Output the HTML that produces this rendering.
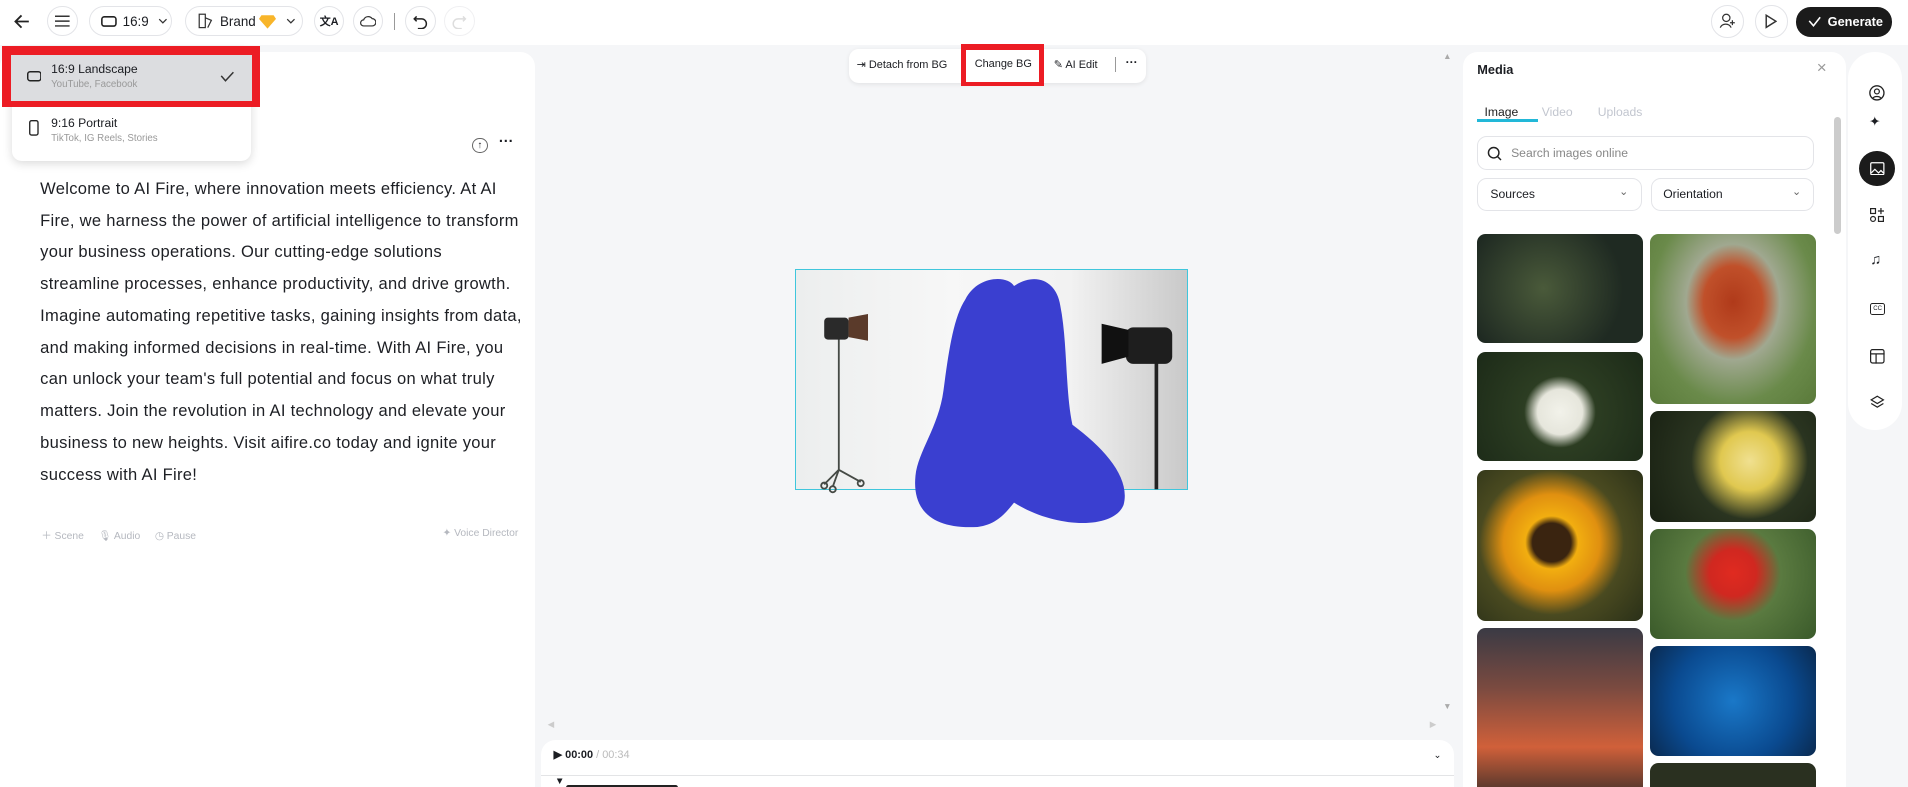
<!DOCTYPE html>
<html><head><meta charset="utf-8">
<style>
*{box-sizing:border-box;margin:0;padding:0}
html,body{width:1908px;height:787px;overflow:hidden;background:#f5f6f8}
body{font-family:"Liberation Sans",sans-serif;color:#1b1d22}
#r{zoom:1.21684;width:1568px;height:647px;position:relative;overflow:hidden}
.a{position:absolute}
.top{left:0;top:0;width:1568px;height:37px;background:#fff}
.circ{position:absolute;border:1px solid #e3e4e8;border-radius:50%;width:25px;height:25px;top:5px;display:flex;align-items:center;justify-content:center;background:#fff}
.pill{position:absolute;border:1px solid #e3e4e8;border-radius:13px;height:25px;top:5px;display:flex;align-items:center;font-size:11px;background:#fff}
.card{background:#fff;border-radius:12px}
svg{display:block}
.ph{position:absolute;border-radius:7px}
.txt div{white-space:nowrap}
</style></head><body><div id="r">
<div class="a top"></div>
<svg class="a" style="left:11px;top:11px" width="14" height="14" viewBox="0 0 14 14"><path d="M13 7H2M7 2L2 7l5 5" stroke="#222" stroke-width="1.5" fill="none"/></svg>
<div class="circ" style="left:39px"><svg width="12" height="10"><path d="M0 1h12M0 5h12M0 9h12" stroke="#333" stroke-width="1.2"/></svg></div>
<div class="pill" style="left:73px;width:68px;padding-left:9px"><svg width="13" height="9"><rect x=".7" y=".7" width="11.6" height="7.6" rx="2" stroke="#222" fill="none" stroke-width="1.3"/></svg><span style="margin-left:5px">16:9</span><svg style="margin-left:8px" width="8" height="5"><path d="M1 1l3 3 3-3" stroke="#333" fill="none"/></svg></div>
<div class="pill" style="left:152px;width:97px;padding-left:10px"><svg width="13" height="13"><rect x="1" y="1" width="5" height="11" stroke="#333" fill="none"/><path d="M6 4l5 2-3 6" stroke="#333" fill="none"/></svg><span style="margin-left:5px">Brand</span><svg style="margin-left:3px" width="14" height="12"><path d="M2 1h10l2 3-7 8-7-8z" fill="#f8b52a"/></svg><svg style="margin-left:8px" width="8" height="5"><path d="M1 1l3 3 3-3" stroke="#333" fill="none"/></svg></div>
<div class="circ" style="left:258px;font-size:9px;font-weight:bold">文A</div>
<div class="circ" style="left:290px"><svg width="13" height="10"><path d="M3 9h7a3 3 0 0 0 0-6 4 4 0 0 0-7 1 2.5 2.5 0 0 0 0 5z" stroke="#333" fill="none"/></svg></div>
<div class="a" style="left:324px;top:11px;width:1px;height:14px;background:#999"></div>
<div class="circ" style="left:333px"><svg width="12" height="12"><path d="M3 2L1 4l2 2M1 4h6a4 4 0 0 1 0 8H4" stroke="#222" fill="none" stroke-width="1.2"/></svg></div>
<div class="circ" style="left:365px;border-color:#f0f0f2"><svg width="12" height="12"><path d="M9 2l2 2-2 2M11 4H5a4 4 0 0 0 0 8h3" stroke="#ddd" fill="none" stroke-width="1.2"/></svg></div>
<div class="circ" style="left:1406px;width:27px;height:27px;top:4px"><svg width="14" height="13"><circle cx="6" cy="4" r="3" stroke="#333" fill="none"/><path d="M1 12a5 5 0 0 1 9 0M11 6v4M9 8h4" stroke="#333" fill="none"/></svg></div>
<div class="circ" style="left:1442px;width:27px;height:27px;top:4px"><svg width="10" height="12"><path d="M1 1l8 5-8 5z" stroke="#333" fill="none" stroke-width="1.2"/></svg></div>
<div class="a" style="left:1476px;top:6px;width:79px;height:24px;border-radius:12px;background:#1b1b1b;color:#fff;font-size:10.5px;font-weight:bold;display:flex;align-items:center;padding-left:10px"><svg width="11" height="9"><path d="M1 4l3.5 4L10 1" stroke="#fff" fill="none" stroke-width="1.3"/></svg><span style="margin-left:5px">Generate</span></div>

<div class="a card" style="left:0;top:43px;width:440px;height:620px"></div>
<div class="a txt" style="left:33px;top:142px;font-size:13.6px;line-height:26.1px;color:#1d1f24;letter-spacing:.25px">
<div>Welcome to AI Fire, where innovation meets efficiency. At AI</div>
<div>Fire, we harness the power of artificial intelligence to transform</div>
<div>your business operations. Our cutting-edge solutions</div>
<div>streamline processes, enhance productivity, and drive growth.</div>
<div>Imagine automating repetitive tasks, gaining insights from data,</div>
<div>and making informed decisions in real-time. With AI Fire, you</div>
<div>can unlock your team's full potential and focus on what truly</div>
<div>matters. Join the revolution in AI technology and elevate your</div>
<div>business to new heights. Visit aifire.co today and ignite your</div>
<div>success with AI Fire!</div>
</div>
<div class="a" style="left:34px;top:433px;font-size:8.5px;color:#b5b8bf;width:392px">
<span>＋ Scene</span><span style="margin-left:12px">🎙 Audio</span><span style="margin-left:12px">◷ Pause</span><span style="float:right">✦ Voice Director</span></div>
<div class="a" style="left:388px;top:113px;width:13px;height:13px;border:1px solid #666;border-radius:50%;font-size:8px;text-align:center;line-height:11px">↑</div>
<div class="a" style="left:410px;top:110px;font-size:12px;font-weight:bold">···</div>

<div class="a" style="left:10px;top:40px;width:196px;height:92px;background:#fff;border-radius:8px;box-shadow:0 2px 8px rgba(0,0,0,.15)"></div>
<div class="a" style="left:2px;top:38px;width:212px;height:50px;background:#ec1c24"></div>
<div class="a" style="left:9px;top:45px;width:198px;height:38px;background:#dcdde0"></div>
<svg class="a" style="left:22px;top:58px" width="12" height="9"><rect x=".6" y=".6" width="10.8" height="7.4" rx="2" stroke="#222" fill="none" stroke-width="1.2"/></svg>
<div class="a" style="left:42px;top:51px;font-size:10px">16:9 Landscape</div>
<div class="a" style="left:42px;top:65px;font-size:8px;color:#999">YouTube, Facebook</div>
<svg class="a" style="left:181px;top:58px" width="12" height="9"><path d="M1 4l3.5 4L11 1" stroke="#333" fill="none" stroke-width="1.2"/></svg>
<svg class="a" style="left:24px;top:99px" width="8" height="13"><rect x=".6" y=".6" width="6.8" height="11.8" rx="1.5" stroke="#222" fill="none" stroke-width="1.1"/></svg>
<div class="a" style="left:42px;top:95px;font-size:10px">9:16 Portrait</div>
<div class="a" style="left:42px;top:109px;font-size:8px;color:#999">TikTok, IG Reels, Stories</div>

<div class="a" style="left:698px;top:40px;width:244px;height:28px;background:#fff;border-radius:8px;box-shadow:0 1px 4px rgba(0,0,0,.08)"></div>
<div class="a" style="left:704px;top:48px;font-size:9px">⇥ Detach from BG</div>
<div class="a" style="left:790px;top:36px;width:68px;height:35px;background:#ec1c24"></div>
<div class="a" style="left:794px;top:41px;width:60px;height:26px;background:#fff"></div>
<div class="a" style="left:801px;top:48px;font-size:9px">Change BG</div>
<div class="a" style="left:866px;top:48px;font-size:9px">✎ AI Edit</div>
<div class="a" style="left:916px;top:47px;width:1px;height:12px;background:#999"></div>
<div class="a" style="left:925px;top:45px;font-size:10px;font-weight:bold">···</div>
<div class="a" style="left:1186px;top:42px;font-size:7px;color:#aaa">▲</div>
<div class="a" style="left:1186px;top:576px;font-size:7px;color:#aaa">▼</div>
<div class="a" style="left:450px;top:591px;font-size:7px;color:#ccc">◀</div>
<div class="a" style="left:1175px;top:591px;font-size:7px;color:#ccc">▶</div>

<div class="a" style="left:653px;top:221px;width:323px;height:182px;border:1px solid #3fc6dc;background:linear-gradient(90deg,#eceeee,#f7f7f7 40%,#f2f2f2 70%,#c9c9c9)"></div>
<svg class="a" style="left:653px;top:221px" width="323" height="215" viewBox="0 0 323 215">
<g stroke="#454a45" stroke-width="1.5" fill="none"><path d="M36 50v115M36 165l-12 12M36 165l18 10M36 165l-5 14"/><circle cx="24" cy="178" r="2.5"/><circle cx="54" cy="176" r="2.5"/><circle cx="31" cy="181" r="2.5"/><path d="M297 75v106" stroke-width="3" stroke="#222"/></g>
<rect x="24" y="40" width="20" height="18" rx="3" fill="#2a2a2a"/><path d="M44 40l16 -3v22l-16-3z" fill="#5a3a2a"/>
<rect x="272" y="48" width="38" height="30" rx="6" fill="#1e1e1e"/><path d="M252 45l22 5v22l-22 6z" fill="#111"/>
<path d="M140 25C150 5 175 5 180 14C198 2 215 10 218 30C224 60 222 100 228 128C255 148 276 172 270 194C262 214 215 214 180 192C172 202 165 210 150 212C115 214 96 200 99 170C101 150 118 130 122 100C126 70 130 40 140 25Z" fill="#3a3fd0"/>
</svg>

<div class="a card" style="left:445px;top:608px;width:750px;height:50px"></div>
<div class="a" style="left:445px;top:637px;width:750px;height:1px;background:#e3e4e6"></div>
<div class="a" style="left:455px;top:615px;font-size:9px;font-weight:bold">▶ 00:00 <span style="color:#bbb;font-weight:normal">/ 00:34</span></div>
<div class="a" style="left:1178px;top:616px;font-size:8px">⌄</div>
<div class="a" style="left:456px;top:638px;font-size:8px">▼</div>
<div class="a" style="left:465px;top:645px;width:92px;height:4px;background:#222;border-radius:2px"></div>

<div class="a card" style="left:1202px;top:43px;width:315px;height:620px"></div>
<div class="a" style="left:1214px;top:51px;font-size:10.5px;font-weight:bold">Media</div>
<div class="a" style="left:1493px;top:48px;font-size:14px;color:#999">×</div>
<div class="a" style="left:1220px;top:86px;font-size:10px;color:#222">Image</div>
<div class="a" style="left:1214px;top:98px;width:50px;height:2px;background:#22b8d8"></div>
<div class="a" style="left:1267px;top:86px;font-size:10px;color:#c2c6cf">Video</div>
<div class="a" style="left:1313px;top:86px;font-size:10px;color:#c2c6cf">Uploads</div>
<div class="a" style="left:1507px;top:96px;width:6px;height:96px;background:#ccc;border-radius:3px"></div>
<div class="a" style="left:1214px;top:112px;width:277px;height:28px;border:1px solid #e3e4e8;border-radius:8px;font-size:10px;color:#888;padding:7px 0 0 27px">Search images online</div>
<svg class="a" style="left:1222px;top:120px" width="12" height="12"><circle cx="5.5" cy="5.5" r="4.3" stroke="#222" fill="none" stroke-width="1.2"/><path d="M8.5 8.5l3 3" stroke="#222" stroke-width="1.2"/></svg>
<div class="a" style="left:1214px;top:146px;width:135px;height:27px;border:1px solid #e3e4e8;border-radius:8px;font-size:10px;padding:7px 0 0 10px">Sources<span style="position:absolute;right:10px;top:5px;font-size:9px;color:#666">⌄</span></div>
<div class="a" style="left:1357px;top:146px;width:134px;height:27px;border:1px solid #e3e4e8;border-radius:8px;font-size:10px;padding:7px 0 0 9px">Orientation<span style="position:absolute;right:10px;top:5px;font-size:9px;color:#666">⌄</span></div>
<div class="ph" style="left:1214px;top:192px;width:136px;height:90px;background:radial-gradient(circle at 40% 50%,#4a5a3a,#1f2a22 70%)"></div>
<div class="ph" style="left:1214px;top:289px;width:136px;height:90px;background:radial-gradient(circle at 50% 55%,#f2f2ea 0,#e6e6dc 22%,#2c3d22 35%,#1c2a18)"></div>
<div class="ph" style="left:1214px;top:386px;width:136px;height:124px;background:radial-gradient(circle at 45% 48%,#3a2410 0,#3a2410 16%,#f2ae10 22%,#e09010 40%,#4a4a20 60%,#2a3018)"></div>
<div class="ph" style="left:1214px;top:516px;width:136px;height:140px;background:linear-gradient(180deg,#3a3a44,#7a4a40 35%,#d0603a 70%,#40302a)"></div>
<div class="ph" style="left:1356px;top:192px;width:136px;height:140px;background:radial-gradient(ellipse at 50% 40%,#b03a1a 0,#c0502a 25%,#a0a890 40%,#6a8a4a 70%,#5a7a3a)"></div>
<div class="ph" style="left:1356px;top:338px;width:136px;height:91px;background:radial-gradient(circle at 60% 45%,#f0e090,#e0c850 25%,#2a3420 50%,#182012)"></div>
<div class="ph" style="left:1356px;top:435px;width:136px;height:90px;background:radial-gradient(circle at 50% 40%,#e02a20 0,#d02820 22%,#5a7a40 45%,#3a5a2a)"></div>
<div class="ph" style="left:1356px;top:531px;width:136px;height:90px;background:radial-gradient(circle at 50% 50%,#1a78c8,#0a4a90 60%,#0a2a50)"></div>
<div class="ph" style="left:1356px;top:627px;width:136px;height:40px;background:#2a3020"></div>

<div class="a card" style="left:1519px;top:43px;width:44px;height:310px;border-radius:22px"></div>
<svg class="a" style="left:1536px;top:70px" width="13" height="13"><circle cx="6.5" cy="6.5" r="5.8" stroke="#222" fill="none" stroke-width="1.1"/><circle cx="6.5" cy="5.3" r="2" stroke="#222" fill="none"/><path d="M3 11a4 3 0 0 1 7 0" stroke="#222" fill="none"/></svg>
<div class="a" style="left:1536px;top:94px;font-size:11px">✦</div>
<div class="a" style="left:1528px;top:124px;width:29px;height:29px;border-radius:50%;background:#1b1b1b"></div>
<svg class="a" style="left:1537px;top:133px" width="12" height="11"><rect x=".6" y=".6" width="10.8" height="9.8" rx="1" stroke="#fff" fill="none"/><path d="M1 9l3-3 3 3 2-2 2 2" stroke="#fff" fill="none"/></svg>
<svg class="a" style="left:1537px;top:171px" width="12" height="12"><rect x=".5" y=".5" width="4" height="4" stroke="#222" fill="none"/><rect x="7" y="7" width="4" height="4" stroke="#222" fill="none"/><path d="M9 0v5M6.5 2.5h5" stroke="#222"/><circle cx="2.5" cy="9" r="2" stroke="#222" fill="none"/></svg>
<div class="a" style="left:1537px;top:207px;font-size:12px">♫</div>
<div class="a" style="left:1537px;top:249px;width:12px;height:10px;border:1px solid #222;border-radius:2px;font-size:5px;text-align:center;line-height:8px">CC</div>
<svg class="a" style="left:1537px;top:287px" width="12" height="12"><rect x=".5" y=".5" width="11" height="11" rx="1.5" stroke="#222" fill="none"/><path d="M0 4h12M5 4v8" stroke="#222"/></svg>
<svg class="a" style="left:1537px;top:325px" width="12" height="12"><path d="M6 1l5 3-5 3-5-3zM1 7l5 3 5-3" stroke="#222" fill="none"/></svg>
</div></body></html>
